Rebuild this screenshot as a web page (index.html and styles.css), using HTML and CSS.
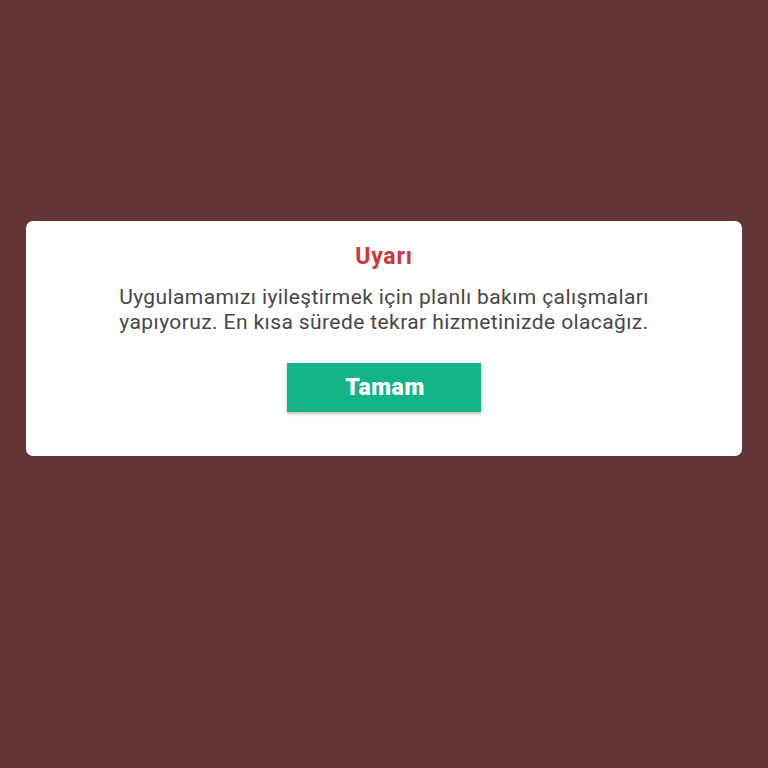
FILE: index.html
```html
<!DOCTYPE html>
<html>
<head>
<meta charset="utf-8">
<link rel="stylesheet" href="styles.css">
</head>
<body>
<div class="screen">
  <div class="card">
    <div class="title">Uyarı</div>
    <div class="message">Uygulamamızı iyileştirmek için planlı bakım çalışmaları<br>yapıyoruz. En kısa sürede tekrar hizmetinizde olacağız.</div>
    <button class="btn">Tamam</button>
  </div>
</div>
</body>
</html>
```
FILE: styles.css
```css
html, body {
  margin: 0;
  padding: 0;
  width: 768px;
  height: 768px;
  background: #623433;
  font-family: Roboto, "Liberation Sans", sans-serif;
}
.screen {
  width: 768px;
  height: 768px;
  display: flex;
  flex-direction: column;
  align-items: center;
  padding-top: 221px;
  box-sizing: border-box;
}
.card {
  width: 716px;
  height: 235px;
  box-sizing: border-box;
  background: #ffffff;
  border-radius: 7px;
  display: flex;
  flex-direction: column;
  align-items: center;
  padding-top: 22px;
}
.title {
  color: #d03535;
  font-weight: 700;
  font-size: 23px;
  letter-spacing: 0.8px;
  line-height: 28px;
}
.message {
  margin-top: 14px;
  color: #474747;
  font-size: 21px;
  letter-spacing: 0.4px;
  line-height: 25px;
  text-align: center;
}
.btn {
  margin-top: 28px;
  width: 194px;
  height: 49px;
  border: none;
  background: #13b487;
  color: #ffffff;
  font-family: Roboto, "Liberation Sans", sans-serif;
  font-weight: 900;
  font-size: 23px;
  letter-spacing: 0.6px;
  box-shadow: 0 2px 3px rgba(0,0,0,0.25);
  padding: 0 0 0 2px;
}
```
